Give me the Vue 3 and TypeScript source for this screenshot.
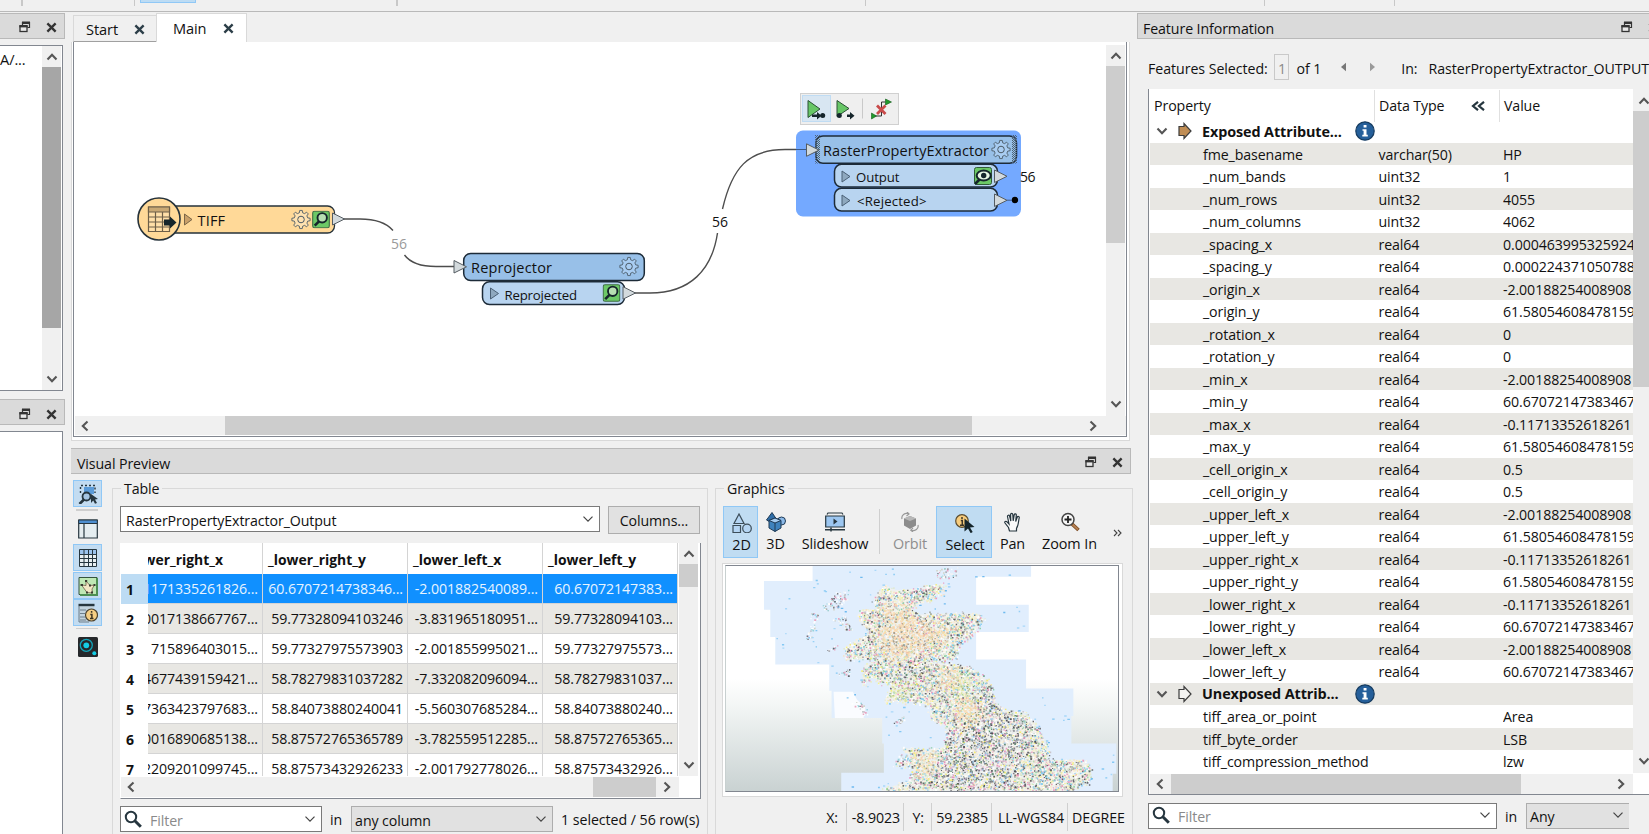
<script setup lang="ts">
type Point = [number, number]

const GEAR = gearPath(8, 9.2, 6.9)

function gearPath(teeth: number, outer: number, inner: number): string {
  const points: string[] = []
  const step = (Math.PI * 2) / teeth
  for (let i = 0; i < teeth; i++) {
    const a = i * step - Math.PI / 2
    const corners: [number, number][] = [
      [a - step * 0.3, inner],
      [a - step * 0.17, outer],
      [a + step * 0.17, outer],
      [a + step * 0.3, inner],
    ]
    for (const [angle, r] of corners) {
      points.push(`${(Math.cos(angle) * r).toFixed(2)} ${(Math.sin(angle) * r).toFixed(2)}`)
    }
  }
  return `M${points.join('L')}Z`
}

interface Attribute { name: string; type: string; value: string; group?: 'exposed' | 'unexposed' }

const attr = (name: string, type: string, value: string): Attribute => ({ name, type, value })
const W = '-2.00188254008908'
const E = '-0.11713352618261'
const N = '61.58054608478159'
const S = '60.67072147383467'

const attributes: Attribute[] = [
  { name: 'Exposed Attribute...', type: '', value: '', group: 'exposed' },
  attr('fme_basename', 'varchar(50)', 'HP'),
  attr('_num_bands', 'uint32', '1'),
  attr('_num_rows', 'uint32', '4055'),
  attr('_num_columns', 'uint32', '4062'),
  attr('_spacing_x', 'real64', '0.000463995325924'),
  attr('_spacing_y', 'real64', '0.000224371050788'),
  attr('_origin_x', 'real64', W),
  attr('_origin_y', 'real64', N),
  attr('_rotation_x', 'real64', '0'),
  attr('_rotation_y', 'real64', '0'),
  attr('_min_x', 'real64', W),
  attr('_min_y', 'real64', S),
  attr('_max_x', 'real64', E),
  attr('_max_y', 'real64', N),
  attr('_cell_origin_x', 'real64', '0.5'),
  attr('_cell_origin_y', 'real64', '0.5'),
  attr('_upper_left_x', 'real64', W),
  attr('_upper_left_y', 'real64', N),
  attr('_upper_right_x', 'real64', E),
  attr('_upper_right_y', 'real64', N),
  attr('_lower_right_x', 'real64', E),
  attr('_lower_right_y', 'real64', S),
  attr('_lower_left_x', 'real64', W),
  attr('_lower_left_y', 'real64', S),
  { name: 'Unexposed Attrib...', type: '', value: '', group: 'unexposed' },
  attr('tiff_area_or_point', '', 'Area'),
  attr('tiff_byte_order', '', 'LSB'),
  attr('tiff_compression_method', '', 'lzw'),
]

const columns = ['wer_right_x', '_lower_right_y', '_lower_left_x', '_lower_left_y']
const rows: string[][] = [
  ['1171335261826...', '60.6707214738346...', '-2.001882540089...', '60.67072147383...'],
  ['0017138667767...', '59.77328094103246', '-3.831965180951...', '59.77328094103...'],
  ['715896403015...', '59.77327975573903', '-2.001855995021...', '59.77327975573...'],
  ['4677439159421...', '58.78279831037282', '-7.332082096094...', '58.78279831037...'],
  ['7363423797683...', '58.84073880240041', '-5.560307685284...', '58.84073880240...'],
  ['0016890685138...', '58.87572765365789', '-3.782559512285...', '58.87572765365...'],
  ['2209201099745...', '58.87573432926233', '-2.001792778026...', '58.87573432926...'],
]

/* ---- Raster mosaic: tiles of sea with speckled land on top ---- */
const poly = (s: string): Point[] => s.split(' ').map((p) => p.split(',').map(Number) as Point)

const SEA = '307,48 963,48 963,80 798,80 798,164 956,164 956,246 798,246 798,328 948,328 948,415 1090,415 1090,497 1084,497 1084,580 1219,580 1219,670 1208,670 1208,722 393,722 393,667 521,667 521,580 516,580 516,503 364,503 364,422 357,422 357,343 195,343 195,261 180,261 180,179 161,179 161,93 307,93'
const IRELAND = '370,425 428,425 440,448 465,472 460,503 374,503'
const LAND = '520,108 560,120 620,116 700,100 692,130 640,155 606,172 616,194 690,190 800,190 822,208 796,245 742,292 738,322 664,338 722,342 780,350 840,398 852,450 880,478 940,488 975,520 1000,570 1018,605 1008,630 1120,628 1144,655 1140,690 1085,722 510,722 600,690 612,650 552,642 600,620 572,592 640,600 700,590 712,545 706,525 672,516 658,490 662,465 600,455 522,455 545,402 500,395 490,375 455,412 462,345 520,322 405,330 405,290 480,250 445,210 452,180 500,176 490,145'

const land = poly(LAND)
const sea = poly(SEA)
const tanAreas = [
  poly('525,165 600,180 620,215 700,225 722,250 690,275 650,285 600,320 535,320 500,285 515,235 490,185'),
  poly('740,450 810,450 812,510 750,530'),
  poly('670,370 770,365 720,400 665,410'),
  poly('600,610 680,610 670,650 620,670'),
]
const greenAreas = [poly('545,400 600,400 590,445 535,440'), poly('730,385 775,385 770,440 735,435')]
const darkAreas = [
  poly('540,350 660,335 640,385 560,380'),
  poly('790,400 850,420 870,480 960,520 960,560 910,650 840,650 800,600 760,590 720,580 715,530 800,540 820,470'),
  poly('700,600 900,590 900,722 660,722'),
]
const islands = [
  poly('330,158 375,125 415,115 418,150 365,180 340,182'),
  poly('300,190 328,188 312,235 300,265 278,270 300,235'),
  poly('358,210 398,195 432,222 428,240 400,236 380,212'),
  poly('675,58 745,46 735,80 680,88'),
  poly('380,370 410,355 430,360 415,380 385,380'),
  poly('548,518 578,495 584,506 562,525'),
  poly('420,455 460,455 475,490 462,498'),
  poly('340,295 380,280 382,295 350,302'),
  poly('548,640 570,610 600,620 560,645'),
]

function inside([x, y]: Point, ring: Point[]): boolean {
  let hit = false
  for (let i = 0, j = ring.length - 1; i < ring.length; j = i++) {
    const [xi, yi] = ring[i]
    const [xj, yj] = ring[j]
    if (yi > y !== yj > y && x < ((xj - xi) * (y - yi)) / (yj - yi) + xi) hit = !hit
  }
  return hit
}

let seed = 20231
function rand(): number {
  seed = (seed * 1664525 + 1013904223) % 4294967296
  return seed / 4294967296
}

const palettes: Record<string, string[]> = {
  tan: ['#fad9b0', '#fad9b0', '#f8d8ae', '#fadcb6', '#f9dfbd', '#fad9b0', '#f6d2a4', '#b9dccb', '#a39a8a', '#fdf3df', '#f2dfa4', '#ecb29c'],
  green: ['#e2e8ae', '#e8ecbc', '#d6e0a0', '#f5f09a', '#e2e8ae', '#9fb887', '#8b9b80'],
  dark: ['#4a4a50', '#77777d', '#9a9ca3', '#ffffff', '#ffffff', '#ffffff', '#d2ccd8', '#5f8a73', '#f2ea62', '#e58fbc', '#9ec6e4', '#f8eee0', '#f6e9d2', '#e6e6e8'],
  base: ['#ffffff', '#ffffff', '#ffffff', '#faf0d6', '#fcf4e2', '#dfe8d4', '#a1a79e', '#5d5d63', '#f6ee74', '#80caf0', '#ea94bc', '#86cc9e', '#f8e2c2', '#c5c0c5', '#edf2c4'],
  island: ['#ffffff', '#ffffff', '#f4f4f4', '#5a5a60', '#a9aab2', '#8fd0d8', '#e9a0bc', '#cfcfbf'],
  sea: ['#7cc4f2', '#8fcdf5', '#a4d6f8', '#64b5ee'],
}

const layers = new Map<string, string>()
function dot(color: string, x: number, y: number, w: number, h: number): void {
  const d = `M${x.toFixed(1)} ${y.toFixed(1)}h${w.toFixed(1)}v${h.toFixed(1)}h-${w.toFixed(1)}z`
  layers.set(color, (layers.get(color) ?? '') + d)
}
const pick = (name: string): string => palettes[name][Math.floor(rand() * palettes[name].length)]

for (let y = 50; y < 720; y += 4) {
  for (let x = 270; x < 1150; x += 4) {
    const p: Point = [x + (rand() - 0.5) * 14, y + (rand() - 0.5) * 14]
    const probe: Point = [p[0] + (rand() - 0.5) * 50, p[1] + (rand() - 0.5) * 50]
    const shore: Point = [p[0] + (rand() - 0.5) * 16, p[1] + (rand() - 0.5) * 16]
    const size = 3 + rand() * 2.6
    if (inside(shore, land)) {
      let zone = 'base'
      if (tanAreas.some((a) => inside(probe, a))) zone = 'tan'
      else if (greenAreas.some((a) => inside(probe, a))) zone = 'green'
      else if (darkAreas.some((a) => inside(probe, a))) zone = 'dark'
      if (zone !== 'base' && rand() < 0.18) zone = 'base'
      if (rand() < 0.92) dot(pick(zone), p[0], p[1], size, size)
    } else if (rand() < 0.4 && islands.some((a) => inside(p, a))) {
      dot(pick('island'), p[0], p[1], size, size)
    }
  }
}
for (let i = 0; i < 260; i++) {
  const p: Point = [165 + rand() * 1045, 52 + rand() * 662]
  if (inside(p, sea) && !inside(p, land)) dot(pick('sea'), p[0], p[1], 4 + rand() * 4, 4)
}
const speckles = [...layers].map(([color, d]) => ({ color, d }))
</script>

<template>
  <svg class="sprites" aria-hidden="true">
    <symbol id="restore" viewBox="0 0 12 12">
      <path d="M3.5 4V1.5h7v5H8.5" fill="none" stroke="#333" stroke-width="1.2" /><path d="M3 .5h8v2.500H3z" fill="#333" />
      <rect x="1" y="5" width="7" height="5.500" fill="#e8e8e8" stroke="#333" stroke-width="1.300" /><path d="M.4 4h8.200v2.400H.4z" fill="#333" />
    </symbol>
    <symbol id="close" viewBox="0 0 12 12"><path d="M1.500 1.500l9 9M10.500 1.500l-9 9" stroke="currentColor" stroke-width="2.600" /></symbol>
    <symbol id="chev" viewBox="0 0 12 12"><path d="M1.500 3.500L6 8.200l4.500-4.700" fill="none" stroke="#555" stroke-width="2.100" /></symbol>
    <symbol id="drop" viewBox="0 0 12 12"><path d="M1.500 3.700L6 8.200l4.500-4.500" fill="none" stroke="#444" stroke-width="1.200" /></symbol>
    <symbol id="gear" viewBox="-10 -10 20 20">
      <path :d="GEAR" fill="inherit" stroke="#4b5a66" stroke-width=".9" stroke-linejoin="round" />
      <circle r="3.300" fill="none" stroke="#4b5a66" />
    </symbol>
    <symbol id="inspect" viewBox="0 0 18 18">
      <rect x=".7" y=".7" width="16.600" height="16.600" rx="1.800" fill="#6cc866" stroke="#3f6d45" stroke-width="1.100" />
      <circle cx="10.200" cy="7.300" r="4.700" fill="#b7dfb2" stroke="#15252b" stroke-width="1.900" />
      <path d="M7 10.800l-4.300 4.300" stroke="#15252b" stroke-width="2.600" />
    </symbol>
    <symbol id="lens" viewBox="0 0 18 18">
      <circle cx="7" cy="7" r="5.200" fill="none" stroke="#26363f" stroke-width="2" /><path d="M10.800 10.800l6 6" stroke="#26363f" stroke-width="3" />
    </symbol>
    <symbol id="info" viewBox="0 0 20 20">
      <circle cx="10" cy="10" r="9.200" fill="#255f9a" stroke="#173c60" stroke-width="1.200" />
      <path d="M8.600 4h2.900v2.600H8.600zM7.500 8.200h4v5.600h1.300v1.600H7.300v-1.600h1.300v-4H7.500z" fill="#fff" />
    </symbol>
  </svg>

  <div class="app">
    <div class="strip">
      <i class="s1"></i><i class="s2"></i><b></b><i class="s3"></i><i class="s6"></i><i class="s4"></i><i class="s5"></i>
    </div>
    <div class="work">
      <!-- left dock -->
      <aside class="left">
        <div class="dockbar"><svg><use href="#restore" /></svg><svg><use href="#close" /></svg></div>
        <div class="leftbox first">
          <span>A/...</span>
          <div class="vbar"><svg class="up"><use href="#chev" /></svg><div class="lthumb"></div><svg><use href="#chev" /></svg></div>
        </div>
        <div class="dockbar second"><svg><use href="#restore" /></svg><svg><use href="#close" /></svg></div>
        <div class="leftbox rest"></div>
      </aside>

      <!-- centre -->
      <main class="center">
        <div class="tabs">
          <div class="tab start"><span>Start</span><svg><use href="#close" /></svg></div>
          <div class="tab main"><span>Main</span><svg><use href="#close" /></svg></div>
        </div>
        <div class="pane">
          <div class="frame">
            <svg class="canvas" viewBox="74 42 1032 374" width="1032" height="374">
              <defs>
                <pattern id="dither" width="2" height="2" patternUnits="userSpaceOnUse"><path d="M0 0h1v1H0zM1 1h1v1H1z" fill="#4f6478" /></pattern>
              </defs>
              <g fill="none" stroke="#4d4d4d" stroke-width="1.4">
                <path d="M344 219H360Q383 219 393 230.500M404.500 255Q413 266.500 436 266.500H455" />
                <path d="M635 293H650C690 293 712 270 717.500 233M722.500 209C732 168 748 149.500 785 149.500H807" />
              </g>
              <g stroke="#26323a" stroke-width="1.3">
                <rect x="160" y="206" width="174.500" height="27" rx="7" fill="#ffd998" />
                <circle cx="159" cy="219" r="21" fill="#ffd998" stroke-width="1.6" />
              </g>
              <g stroke="#6d5f48" stroke-width="1.200">
                <path d="M148.500 207h21v24.500h-21z" fill="#ffdfa8" /><path d="M148.500 207h21v5h-21z" fill="#c9a874" />
                <path d="M148.500 217h21M148.500 222h21M148.500 227h21M155.500 212v19.500M162.500 212v19.500" />
              </g>
              <path d="M164 219.500h6v-3l6.500 6-6.500 6v-3h-6z" fill="#15252b" />
              <path d="M184.500 214v11l7.500-5.500z" fill="#c9a06a" stroke="#7a6547" />
              <text x="197.500" y="226" textLength="27.500" class="big">TIFF</text>
              <use href="#gear" x="291" y="209.500" width="20" height="20" fill="#ffe2b0" />
              <use href="#inspect" x="312" y="210.500" width="18" height="18" />
              <path d="M332.500 213v12l12-6z" class="port" />
              <text x="391" y="248.500" textLength="16" class="muted">56</text>

              <rect x="463.700" y="253.500" width="180.600" height="27" rx="7" class="node" />
              <rect x="482.500" y="281.700" width="142" height="22.800" rx="7" class="sub" />
              <path d="M454 260.500v12.500l12.500-6.200z" class="port" />
              <text x="471" y="273" textLength="81" class="big">Reprojector</text>
              <use href="#gear" x="619" y="256.500" width="20" height="20" fill="#a9cdf2" />
              <path d="M490.500 288v11l8-5.500z" class="play" />
              <text x="504.500" y="300" textLength="72.500" class="small">Reprojected</text>
              <use href="#inspect" x="602.500" y="284" width="18" height="18" />
              <path d="M623 286.700v12.500l12.500-6.200z" class="port" />
              <text x="712" y="226.500" textLength="16">56</text>

              <rect x="800.500" y="93.500" width="98" height="31" fill="#efefef" stroke="#d0d0d0" />
              <rect x="802.500" y="95.500" width="28" height="26" fill="#d8e6f2" stroke="#c0dcf3" />
              <g fill="#67c666" stroke="#2c5135" stroke-width="1">
                <path d="M808 100.500v17l12-8.500zM837 100.500v16l12-8z" />
              </g>
              <g fill="#15252b">
                <path d="M812 114.500h5v-2.500l4.500 3.700-4.500 3.700v-2.500h-5z" /><circle cx="822.700" cy="115.500" r="2.500" />
                <circle cx="839.300" cy="115.500" r="2.500" /><path d="M847 114.500h3v-2.500l4.500 3.700-4.500 3.700v-2.500H847z" />
              </g>
              <path d="M862.500 98.500v20" stroke="#c9c9c9" />
              <path d="M875 116h6.500v-14h4" fill="none" stroke="#333" /><path d="M871.500 113v6l5-3zM885.500 99v6l6-3z" fill="#1f9a2b" stroke="#145a1b" stroke-width=".6" />
              <path d="M877 105.500l8.500 8.500M885.500 105.500l-8.500 8.500" stroke="#c94b4b" stroke-width="2.800" />

              <rect x="796" y="130.500" width="225" height="86" rx="7" fill="#74a9ff" />
              <path d="M796 149.500h11" stroke="#3a5a8a" />
              <rect x="816" y="136" width="200.500" height="27.300" rx="7" class="node" />
              <path d="M815 135h5v28.500h-5zM1012 135h5v28.500h-5z" fill="url(#dither)" />
              <rect x="834.500" y="164.300" width="163" height="22.800" rx="7" class="sub" />
              <rect x="834.500" y="188.300" width="163" height="22.800" rx="7" class="sub" />
              <path d="M806.500 143.800v12.500l12.500-6.200z" class="port" />
              <text x="823" y="156" textLength="166" class="big">RasterPropertyExtractor</text>
              <use href="#gear" x="991" y="139.500" width="20" height="20" fill="#a9cdf2" />
              <path d="M842 171v11l8-5.500zM842 195v11l8-5.500z" class="play" />
              <text x="856" y="182" textLength="43.500" class="small">Output</text>
              <text x="857" y="206" textLength="69.500" class="small">&lt;Rejected&gt;</text>
              <rect x="974.500" y="167.500" width="17" height="17" rx="2" fill="#6cc866" stroke="#2f5b37" />
              <path d="M979.500 179.500l-4.500 4.500" stroke="#15252b" stroke-width="2.600" />
              <ellipse cx="983.700" cy="175.500" rx="7" ry="5" fill="#e8f6e4" stroke="#15252b" stroke-width="2" /><circle cx="983.700" cy="175.500" r="2.700" fill="#15252b" />
              <path d="M994.500 170v12.500l12.500-6.200zM994.500 194v12.500l12.500-6.200z" class="port" />
              <path d="M1007 200.200h8" stroke="#3a5a8a" /><circle cx="1015" cy="200" r="3.200" />
              <text x="1020" y="181.500" textLength="15.500">56</text>
            </svg>
            <div class="vbar cv"><svg class="up"><use href="#chev" /></svg><div class="cvthumb"></div><svg><use href="#chev" /></svg></div>
            <div class="hbar ch"><svg class="lt"><use href="#chev" /></svg><div class="chthumb"></div><svg class="rt"><use href="#chev" /></svg></div>
          </div>
        </div>

        <div class="dockbar vp"><span>Visual Preview</span><svg><use href="#restore" /></svg><svg><use href="#close" /></svg></div>

        <div class="preview">
          <nav class="side">
            <div class="sbtn on b1"><svg viewBox="0 0 20 20">
              <path d="M6 3h10v7H6z" fill="#5b9bd8" /><path d="M2.500 9V1.500H17V9" fill="none" stroke="#26363f" stroke-width="1.400" stroke-dasharray="2 2" />
              <circle cx="8.500" cy="12.500" r="4" fill="#a5c5e2" stroke="#26363f" stroke-width="1.800" /><path d="M6 15.500L1.500 20" stroke="#26363f" stroke-width="2.600" /><path d="M13 10l7 5-3 .5 2 3.500-2 .8-1.800-3.300L13 19z" fill="#26363f" />
            </svg></div>
            <hr />
            <div class="sbtn b2"><svg viewBox="0 0 20 20"><path d="M.7 1h18.600v18H.7z" fill="#e4edf0" stroke="#26363f" stroke-width="1.200" /><path d="M.7 1h18.600v3.500H.7z" fill="#4d8fd1" stroke="#26363f" /><path d="M6 4.500V19" stroke="#26363f" stroke-width="1.200" /></svg></div>
            <div class="sbtn on"><svg viewBox="0 0 20 20"><path d="M1.500 1.500h17v17h-17z" fill="#e9f0f2" /><path d="M1.500 1.500h17v5h-17z" fill="#9cc4ee" /><path d="M1.500 1.500h17v17h-17zM1.500 6.500h17M1.500 10.500h17M1.500 14.500h17M6 1.500v17M10.500 1.500v17M14.500 1.500v17" fill="none" stroke="#26363f" stroke-width="1" /></svg></div>
            <div class="sbtn on"><svg viewBox="0 0 20 20"><path d="M1 1.500h18v17H1z" fill="#bfe8b5" stroke="#34543e" /><path d="M19 2v17H2" fill="none" stroke="#4c8f53" stroke-width="2" /><path d="M3.500 9l4.500.5V5l4 4.500 4.500-.5-2.500 4 .5 4L9 16.500z" fill="#f3e6c4" stroke="#6d6048" stroke-width=".8" /><path d="M2.500 8h2.500v2H2.500zM7 4h2.200v2H7zM11 8.500h2v2h-2zM15.500 8h2v2h-2zM13 15.500h2v2h-2zM8 15.500h2v2H8z" fill="#3a3a30" /></svg></div>
            <div class="sbtn on"><svg viewBox="0 0 20 20"><path d="M1 1.500h15v17H1z" fill="#c2d3de" /><path d="M.5 2h16" stroke="#26363f" stroke-width="2.400" /><path d="M2 7h6M2 10.500h5M2 14h5M2 17h6M1 3v16h10" stroke="#6d7f8b" fill="none" /><circle cx="13.500" cy="12" r="6" fill="#f5ce83" stroke="#4c4330" stroke-width="1.200" /><path d="M13.600 8v1.800M12.300 11.500h1.600V15M12 15.500h3.500" stroke="#3c3424" stroke-width="1.500" fill="none" /></svg></div>
            <hr class="h2" />
            <div class="sbtn b6"><svg viewBox="0 0 20 20"><rect width="20" height="20" rx="1.500" fill="#26282b" /><circle cx="8.300" cy="8.300" r="6" fill="none" stroke="#12a5bb" stroke-width="1.300" /><circle cx="8.300" cy="8.300" r="2.900" fill="#14cde6" /><circle cx="16.300" cy="16.300" r="2" fill="#14cde6" /></svg></div>
          </nav>

          <section class="group table-group">
            <h3>Table</h3>
            <div class="line">
              <div class="combo white wide"><span>RasterPropertyExtractor_Output</span><svg><use href="#drop" /></svg></div>
              <div class="button">Columns...</div>
            </div>
            <div class="tableframe">
              <div class="grid">
                <div class="tr th"><div class="num"></div><div v-for="(c, i) in columns" :key="c" :class="'c' + i"><span>{{ c }}</span></div></div>
                <div v-for="(r, n) in rows" :key="n" class="tr" :class="{ sel: n === 0, alt: n % 2 === 1 }">
                  <div class="num">{{ n + 1 }}</div>
                  <div v-for="(v, i) in r" :key="i" :class="'c' + i"><span>{{ v }}</span></div>
                </div>
              </div>
              <div class="vbar tv"><svg class="up"><use href="#chev" /></svg><div class="tvthumb"></div><svg><use href="#chev" /></svg></div>
              <div class="hbar th2"><svg class="lt"><use href="#chev" /></svg><div class="ththumb"></div><svg class="rt"><use href="#chev" /></svg></div>
            </div>
            <div class="line filter">
              <div class="combo white f1"><svg class="lens"><use href="#lens" /></svg><span class="ph">Filter</span><svg><use href="#drop" /></svg></div>
              <span class="in">in</span>
              <div class="combo f2"><span>any column</span><svg><use href="#drop" /></svg></div>
              <span class="count">1 selected / 56 row(s)</span>
            </div>
          </section>

          <section class="group gfx-group">
            <h3>Graphics</h3>
            <div class="tools">
              <div class="tool on t2d"><svg viewBox="0 0 20 20" fill="#b5d5f3" stroke="#3c4d59" stroke-width="1.200"><path d="M7 1L2 10.500h10zM1 12.500h7.500v7H1z" /><circle cx="15" cy="15.500" r="4.300" /></svg><span>2D</span></div>
              <div class="tool t3d"><svg viewBox="0 0 20 20" stroke="#1f3a55"><path d="M6 .5L.5 8 6 11l5-3z" fill="#2f6ea8" /><circle cx="15.500" cy="9" r="4" fill="#8bb9e8" /><path d="M3 8.500l6-2.500 6 2.500V16l-6 3.500L3 16z" fill="#3e82bd" /><path d="M3 8.500l6 2.500 6-2.500L9 6z" fill="#a5cdf2" /><path d="M9 11v8.500" /></svg><span>3D</span></div>
              <div class="tool tslide"><svg viewBox="0 0 20 20"><path d="M2 2.500l1-1.500h14l1 1.500" fill="none" stroke="#26363f" stroke-width="1.200" /><path d="M.7 4h18.600v11H.7z" fill="#9cc6f0" stroke="#26363f" stroke-width="1.200" /><path d="M8.500 6.500v6l4-3z" fill="#26363f" /><path d="M0 17.700h20M6 15.500v4" stroke="#26363f" stroke-width="1.500" /></svg><span>Slideshow</span></div>
              <i></i>
              <div class="tool torbit"><svg viewBox="0 0 20 20"><path d="M4 6.500L10 4l6 2.500v7L10 17l-6-3.500z" fill="#8c8c8c" /><path d="M4 6.500L10 9l6-2.500L10 4z" fill="#b8b8b8" /><path d="M2 7C1 3 5 .8 8 1.500M7 0l2 2-2.500 2M18 13c1 4-3 6-6.500 5.500M13 16l-2.200 2.200L13 20" fill="none" stroke="#999" stroke-width="1.200" /></svg><span>Orbit</span></div>
              <div class="tool on tselect"><svg viewBox="0 0 20 20"><circle cx="7" cy="8" r="6.300" fill="#f7cc7c" stroke="#5a4c30" stroke-width="1.200" /><path d="M7 4v2M5.800 7.500h1.500V12M5 12.300h4" stroke="#3c3424" stroke-width="1.500" fill="none" /><path d="M9.500 5.500l10 8.500-4.500.5 2.700 4.500-2 1.200-2.700-4.700-3.500 3z" fill="#15252b" /></svg><span>Select</span></div>
              <div class="tool tpan"><svg viewBox="0 0 20 20"><path d="M6.500 19l-1-3.500L2 11c-.8-1.400.8-2.300 2-1.200L6 12 4.500 4.500c-.2-1.500 1.800-1.800 2.100-.3L7.800 9l-.2-6.500c0-1.600 2.100-1.600 2.200 0l.4 6.300 1-6c.3-1.500 2.300-1.200 2.100.3l-.6 6.400 1.500-4.300c.5-1.400 2.400-.8 2 .7-.8 3.500-.8 8-2.700 10.500V19z" fill="#fafafa" stroke="#26363f" stroke-width="1.200" /></svg><span>Pan</span></div>
              <div class="tool tzoom"><svg viewBox="0 0 20 20"><path d="M12 12l6.500 6" stroke="#7c4a22" stroke-width="3.600" /><path d="M12.500 12.500l5.500 5" stroke="#b58152" stroke-width="1.800" /><circle cx="8" cy="7.500" r="6" fill="#f7f7f7" stroke="#444" stroke-width="1.500" /><path d="M8 4v7M4.500 7.500h7" stroke="#222" stroke-width="1.800" /></svg><span>Zoom In</span></div>
              <svg class="more" viewBox="0 0 9 8"><path d="M1 1l3 3-3 3M5 1l3 3-3 3" fill="none" stroke="#444" stroke-width="1.100" /></svg>
            </div>
            <div class="view">
              <svg viewBox="47 48 1177 674" preserveAspectRatio="none">
                <polygon :points="SEA" fill="#e1eefd" />
                <polygon :points="IRELAND" fill="#fafcff" />
                <polygon :points="LAND" fill="#fbf3e2" fill-opacity=".5" />
                <path v-for="s in speckles" :key="s.color" :d="s.d" :fill="s.color" fill-opacity=".92" />
              </svg>
            </div>
            <div class="status">
              <span class="q1">X:</span><span class="q2">-8.9023</span><span class="q3">Y:</span><span class="q4">59.2385</span><span class="q5">LL-WGS84</span><span class="q6">DEGREE</span>
            </div>
          </section>
        </div>
      </main>

      <!-- right dock -->
      <aside class="right">
        <div class="dockbar fi"><span>Feature Information</span><svg><use href="#restore" /></svg><svg><use href="#close" /></svg></div>
        <div class="selected">
          <span class="fs">Features Selected:</span><span class="one">1</span><span class="of">of 1</span>
          <svg class="tri" viewBox="0 0 6 10"><path d="M6 0v10L0 5z" fill="#777" /></svg>
          <svg class="tri t2" viewBox="0 0 6 10"><path d="M0 0v10l6-5z" fill="#9a9a9a" /></svg>
          <span class="inl">In:</span><span class="src">RasterPropertyExtractor_OUTPUT</span>
        </div>
        <div class="tree">
          <div class="treemain">
            <div class="treehead"><div>Property</div><div>Data Type<svg viewBox="0 0 14 10"><path d="M7 .8L2 5l5 4.200M13 .8L8 5l5 4.200" fill="none" stroke="#26363f" stroke-width="2.200" /></svg></div><div>Value</div></div>
            <div class="treebody">
              <div v-for="(a, n) in attributes" :key="n" class="row" :class="{ alt: n % 2 === 1, head: a.group }">
                <template v-if="a.group">
                  <svg class="exp"><use href="#chev" /></svg>
                  <svg class="arrow" viewBox="0 0 14 18"><path d="M1 4.500h5V1.500l7 7.500-7 7.500v-3H1z" :fill="a.group === 'exposed' ? '#c08d54' : '#f4f4f2'" stroke="#3c3c3c" stroke-width="1.200" /></svg>
                  <strong>{{ a.name }}</strong>
                  <svg class="inf"><use href="#info" /></svg>
                </template>
                <template v-else><span class="n">{{ a.name }}</span><span class="t">{{ a.type }}</span><span class="v">{{ a.value }}</span></template>
              </div>
            </div>
            <div class="hbar rh"><svg class="lt"><use href="#chev" /></svg><div class="rhthumb"></div><svg class="rt"><use href="#chev" /></svg></div>
          </div>
          <div class="vbar rv"><svg class="up"><use href="#chev" /></svg><div class="rvthumb"></div><svg><use href="#chev" /></svg></div>
        </div>
        <div class="line rfilter">
          <div class="combo white r1"><svg class="lens"><use href="#lens" /></svg><span class="ph">Filter</span><svg><use href="#drop" /></svg></div>
          <span class="in">in</span>
          <div class="combo r2"><span>Any</span><svg><use href="#drop" /></svg></div>
        </div>
      </aside>
    </div>
  </div>
</template>

<style>
body { overflow: hidden; }
</style>

<style scoped>
* { box-sizing: border-box; }
.sprites { position: absolute; width: 0; height: 0; }
.app { width: 1649px; height: 834px; overflow: hidden; background: #f0f0f0; color: #111; font: 14.2px/20px "Open Sans", "Noto Sans", sans-serif; display: flex; flex-direction: column; white-space: nowrap; letter-spacing: -0.1px; }
.app svg { display: block; flex: none; }
.strip { height: 12px; border-bottom: 1px solid #b9b9b9; display: flex; align-items: flex-start; flex: none; }
.strip i { height: 6px; width: 1px; background: #c8c8c8; }
.strip b { height: 3px; width: 56px; margin-left: 5px; background: #bddcf4; border: 1px solid #90c8f6; border-top: 0; }
.strip .s1 { width: 2px; margin-left: 21px; }
.strip .s2 { margin-left: 111px; }
.strip .s3 { width: 2px; margin-left: 200px; }
.strip .s6 { margin-left: 467px; }
.strip .s4 { margin-left: 398px; }
.strip .s5 { margin-left: 129px; }
.work { flex: 1; min-height: 0; display: grid; grid-template-columns: 65px 1066px 512px; column-gap: 3px; }
.work > * { min-width: 0; }

.dockbar { height: 26px; flex: none; background: #dadada; border: 1px solid #b9b9b9; display: flex; align-items: center; padding-top: 2px; }
.dockbar svg { width: 12px; height: 12px; color: #333; }
.dockbar svg + svg { width: 11px; height: 11px; margin-left: 15px; }
.vbar { background: #f0f0f0; display: flex; flex-direction: column; align-items: center; width: 19px; }
.vbar > svg, .hbar > svg { width: 12px; height: 12px; margin: 4px; }
.vbar > svg:last-child { margin-top: auto; margin-bottom: 5px; }
.vbar .up { transform: scaleY(-1); }
.vbar > div { width: 100%; background: #cdcdcd; flex: none; }
.hbar { background: #f0f0f0; display: flex; align-items: center; height: 19px; }
.hbar > div { height: 100%; background: #cdcdcd; }
.hbar .lt { transform: rotate(90deg); }
.hbar .rt { transform: rotate(-90deg); margin-left: auto; }

.left { display: flex; flex-direction: column; padding-top: 1px; }
.left .dockbar { border-left: 0; padding-left: 19px; }
.leftbox { width: 63px; background: #fff; border: 1px solid #828790; border-left: 0; }
.first { height: 346px; margin: 6px 0 8px; display: flex; justify-content: space-between; padding-right: 1px; }
.first span { padding-top: 3px; margin-left: 0; font-size: 14.6px; }
.first .up { margin: 5px 4px 4px; }
.first .vbar > svg:last-child { margin-bottom: 5px; }
.lthumb { height: 261px; background: #a6a6a6 !important; }
.second { padding-top: 4px; }
.rest { flex: 1; margin-top: 6px; border-bottom: 0; }

.center { display: flex; flex-direction: column; padding: 1px 0 0 3px; min-height: 0; }
.tabs { display: flex; align-items: flex-end; height: 29px; padding-left: 2px; flex: none; }
.tab { display: flex; align-items: center; border: 1px solid #d9d9d9; font-size: 14.6px; }
.tab svg { width: 11px; height: 11px; color: #2c3e48; margin-top: 1px; }
.start { width: 83px; height: 27px; padding: 1px 11px 0 12px; border-right: 0; border-bottom-color: #a0a0a0; justify-content: space-between; }
.main { width: 91px; height: 29px; padding: 0 12px 0 16px; background: #fff; border-bottom: 0; justify-content: space-between; }
.pane { width: 1059px; height: 399px; flex: none; background: #fff; border: 1px solid #d9d9d9; border-top: 0; padding: 0 2px 3px 1px; }
.frame { height: 395px; border: 1px solid #828790; border-top: 0; display: grid; grid-template: 374px 20px / 1032px 20px; overflow: hidden; }
.canvas text { fill: #111; font-size: 14px; letter-spacing: 0; }
.canvas .big { font-size: 14.5px; }
.canvas .small { font-size: 13.2px; }
.canvas .muted { fill: #9a9a9a; }
.node { fill: #98c0e8; stroke: #1d2b38; stroke-width: 1.5; }
.sub { fill: #b8d4f0; stroke: #1d2b38; stroke-width: 1.5; }
.port { fill: #d3dadd; stroke: #555c62; stroke-width: 1; }
.play { fill: #8ea8bf; stroke: #4a6076; stroke-width: 1; }
.cv { border-top: 3px solid #fff; }
.cv .up { margin: 5px 4px 4px; }
.cvthumb { height: 177px; }
.cv > svg:last-child { margin-bottom: 6px; }
.ch { grid-column: 1 / 3; margin-left: 1px; padding-right: 23px; }
.chthumb { width: 747px; margin-left: 130px; }
.vp { width: 1060px; margin-top: 7px; padding: 2px 7px 0 6px; border-left: 0; }
.vp span { margin-right: auto; padding-top: 3px; }

.preview { display: flex; width: 1061px; flex: 1; min-height: 0; }
.side { width: 41px; padding: 6px 0 0 2px; flex: none; }
.sbtn { width: 29px; height: 27px; display: flex; align-items: center; justify-content: center; margin-bottom: 0.5px; }
.sbtn svg { width: 20px; height: 20px; }
.sbtn.on { background: #c3dcf1; border: 1px solid #90c8f6; }
.sbtn.on svg { margin-top: 1px; }
.side hr { border: 0; height: 2px; width: 22px; margin: 2px 0 0 3px; background: #cfcfcf; }
.b2 { height: 28px; margin: 4px 0 1px; }
.side .h2 { height: 1px; }
.b6 { height: 20px; margin-top: 8px; }

.group { border: 1px solid #d9d9d9; border-bottom: 0; margin-top: 14px; height: 360px; flex: none; display: flex; flex-direction: column; }
.group h3 { font: inherit; line-height: 20px; height: 17px; align-self: flex-start; margin: -10px 0 0 8px; padding: 0 3px; background: #f0f0f0; flex: none; }
.group h3 + * { margin-top: 10px !important; }
.table-group { width: 596px; padding-left: 7px; }
.table-group h3 { margin-left: 1px; }
.gfx-group { width: 418px; margin-left: 7px; }
.line { display: flex; align-items: flex-start; margin-top: 11px; }
.combo { height: 26px; background: #e1e1e1; border: 1px solid #adadad; display: flex; align-items: center; justify-content: space-between; padding: 3px 5px 0 3px; }
.combo.white { background: #fff; border-color: #7a7a7a; padding-left: 5px; }
.combo svg { width: 12px; height: 12px; margin-top: -4px; }
.combo .lens { width: 18px; height: 18px; margin: -4px 8px 0 -2px; }
.ph { color: #8a8a8a; margin-right: auto; }
.wide { width: 480px; }
.button { width: 92px; height: 28px; margin-left: 8px; background: #e1e1e1; border: 1px solid #adadad; text-align: center; line-height: 28px; }
.tableframe { width: 581px; height: 256px; margin-top: 9px; flex: none; background: #fff; border: 1px solid #828790; border-top: 0; border-left-color: #fff; display: grid; grid-template: 233px 22px / 558px 21px; overflow: hidden; }
.grid { overflow: hidden; }
.tr { display: grid; grid-template-columns: 27px 115px 145px 135px 135px; height: 30px; line-height: 29px; }
.tr > div { border-right: 1px solid #d4d4d4; border-bottom: 1px solid #d4d4d4; overflow: hidden; display: flex; justify-content: flex-end; padding-right: 4px; }
.tr .num { background: #fff; color: #111; font-weight: 700; font-size: 14px; border: 0; padding: 1px 14px 0 0; }
.th { height: 31px; line-height: 33px; font-weight: 700; font-size: 13.9px; letter-spacing: 0; }
.th > div { justify-content: flex-start; padding-left: 5px; border-bottom: 0; }
.th .c0 { justify-content: flex-end; padding-right: 39px; }
.alt > div { background: #e8e7e3; }
.sel > div { background: #1090ff; color: #e8f4ff; }
.sel .num { background: #bddcf4; }
.tv { margin-left: 0; padding-right: 0; height: 233px; }
.tv .up { margin: 5px 4px 4px; }
.tvthumb { height: 23px; }
.tv > svg:last-child { margin-bottom: 5px !important; }
.th2 { height: 20px; margin-top: 1px; padding-right: 2px; }
.ththumb { width: 63px; margin-left: 452px; }
.filter { margin-top: 7px; }
.f1 { width: 202px; }
.in { margin: 4px 9px 0 8px; }
.f2 { width: 202px; }
.count { margin: 4px 0 0 8px; letter-spacing: -0.05px; }

.tools { display: flex; height: 52px; margin: 11px 0 0 7px; flex: none; }
.tool { display: flex; flex-direction: column; align-items: center; padding-top: 5px; font-size: 14.4px; line-height: 22px; border: 1px solid transparent; }
.tool svg { width: 20px; height: 20px; }
.tool span { margin-top: 1px; }
.tool.on { background: #c0dcf2; border-color: #90c8f6; padding: 6px 0 0 2px; }
.t2d { width: 35px; }
.t3d { width: 35px; }
.tslide { width: 84px; }
.tools i { width: 1px; height: 45px; margin: 3px 2px 0 2px; background: #cfcfcf; }
.torbit { width: 54px; color: #8e8e8e; padding-left: 2px; }
.tselect { width: 56px; }
.tpan { width: 41px; }
.tzoom { width: 73px; }
.more { width: 9px; height: 8px; margin: 23px 0 0 7px; }
.view { width: 401px; height: 234px; margin: 5px 0 0 6px; padding: 1px 3px 4px 2px; background: #fff; border: 1px solid #d9d9d9; flex: none; }
.view svg { width: 394px; height: 227px; border: 1px solid #828790; border-left-color: #c8d0d0; background: linear-gradient(#fff 50%, #f3f6f5 62%, #c9d2d2 100%); }
.status { display: flex; height: 28px; margin-top: 6px; line-height: 30px; justify-content: flex-end; padding-right: 6px; }
.status span { border-left: 1px solid #cfcfcf; text-align: right; padding-right: 3px; }
.status .q1 { border: 0; padding-right: 8px; }
.q2 { width: 57px; }
.q3 { width: 28px; padding-right: 7px !important; }
.q4 { width: 60px; }
.q5 { width: 76px; }
.status .q6 { width: 59px; padding-right: 1px; letter-spacing: 0; }

.right { padding-top: 1px; display: flex; flex-direction: column; overflow: hidden; }
.fi { border-right: 0; padding-left: 5px; }
.fi span { width: 478px; flex: none; padding-top: 3px; }
.selected { height: 50px; display: flex; align-items: center; padding: 9px 0 0 11px; flex: none; letter-spacing: -0.05px; }
.fs { width: 130px; }
.one { width: 15px; height: 26px; flex: none; border: 1px solid #c9c9c9; text-align: center; line-height: 27px; color: #8a8a8a; margin-top: -4px; }
.of { width: 46px; margin-left: 7px; }
.tri { width: 5px; height: 10px; margin-top: -3px; }
.t2 { margin-left: 24px; }
.inl { width: 28px; margin-left: 26px; }
.tree { height: 706px; margin-left: 11px; border-left: 1px solid #828790; border-bottom: 1px solid #828790; background: #fff; display: flex; flex: none; }
.treemain { width: 484px; padding-left: 1px; flex: none; }
.treehead { height: 31px; display: grid; grid-template-columns: 225px 125px 1fr; padding-top: 1px; line-height: 32px; }
.treehead > div { padding-left: 4px; border-right: 1px solid #e0e0e0; display: flex; align-items: center; }
.treehead > div:last-child { border: 0; }
.treehead svg { width: 14px; height: 10px; margin-left: 27px; }
.treebody { height: 654px; overflow: hidden; width: 483px; }
.row { height: 22.5px; line-height: 24px; display: grid; grid-template-columns: 228.500px 124.500px 1fr; }
.row.alt, .row.head.alt { background: #e8e7e3; }
.row.head { display: flex; align-items: center; padding-left: 6px; }
.row .n { padding-left: 53px; }
.row .v { overflow: hidden; }
.exp { width: 12px; height: 12px; }
.arrow { width: 14px; height: 18px; margin: 0 10px 0 10px; }
.row strong { width: 153px; font-size: 14.4px; padding-top: 1px; }
.inf { width: 20px; height: 20px; }
.rh { height: 20px; }
.rhthumb { width: 350px; margin-left: 1px; }
.rh .rt { margin-right: 6px; }
.rv { width: 21px; height: 684px; flex: none; }
.rv .up { margin: 6px 4px 4px; }
.rvthumb { height: 276px; }
.rv > svg:last-child { margin-bottom: 6px; }
.rfilter { margin: 8px 0 0 11px; }
.rfilter .combo { padding-top: 2px; }
.r1 { width: 349px; }
.r2 { width: 103px; border-right: 0; }
</style>
